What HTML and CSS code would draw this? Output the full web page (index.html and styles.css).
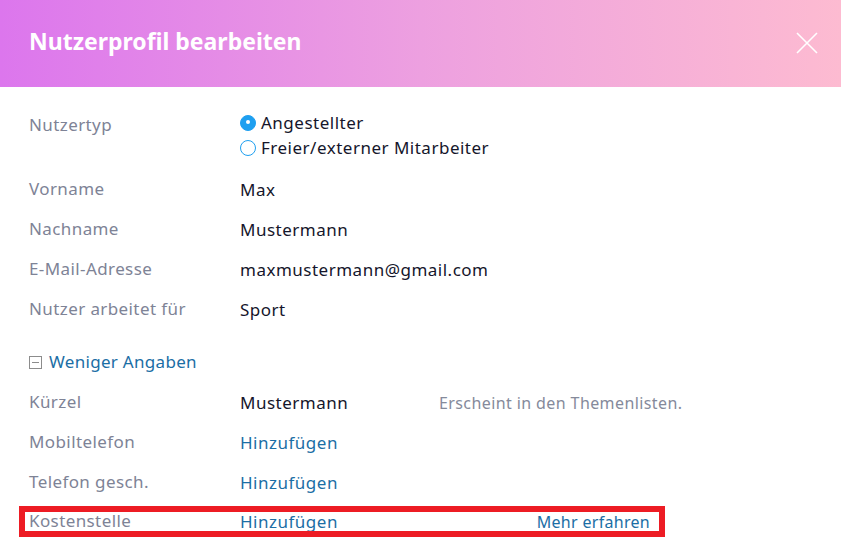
FILE: index.html
```html
<!DOCTYPE html>
<html lang="de">
<head>
    <meta charset="UTF-8">
    <meta name="viewport" content="width=device-width, initial-scale=1.0">
    <title>Nutzerprofil bearbeiten</title>
    <link rel="stylesheet" href="styles.css">
</head>
<body>
    <div class="dialog">
        <div class="dialog-header">
            <h1>Nutzerprofil bearbeiten</h1>
            <button class="close-btn" aria-label="Schließen">
                <svg width="22" height="22" viewBox="0 0 22 22">
                    <path d="M1 1 L21 21 M21 1 L1 21" stroke="#fff" stroke-width="1.6" fill="none"/>
                </svg>
            </button>
        </div>
        <div class="dialog-body">
            <div class="row">
                <div class="label">Nutzertyp</div>
                <div class="value radio-group">
                    <label class="radio"><span class="dot checked"></span>Angestellter</label>
                    <label class="radio"><span class="dot"></span>Freier/externer Mitarbeiter</label>
                </div>
            </div>
            <div class="row">
                <div class="label">Vorname</div>
                <div class="value">Max</div>
            </div>
            <div class="row">
                <div class="label">Nachname</div>
                <div class="value">Mustermann</div>
            </div>
            <div class="row">
                <div class="label">E-Mail-Adresse</div>
                <div class="value">maxmustermann@gmail.com</div>
            </div>
            <div class="row">
                <div class="label">Nutzer arbeitet für</div>
                <div class="value">Sport</div>
            </div>

            <div class="toggle">
                <span class="minus-box"></span>
                <a href="#">Weniger Angaben</a>
            </div>

            <div class="row">
                <div class="label">Kürzel</div>
                <div class="value short">Mustermann</div>
                <div class="hint">Erscheint in den Themenlisten.</div>
            </div>
            <div class="row">
                <div class="label">Mobiltelefon</div>
                <div class="value"><a href="#">Hinzufügen</a></div>
            </div>
            <div class="row">
                <div class="label">Telefon gesch.</div>
                <div class="value"><a href="#">Hinzufügen</a></div>
            </div>
            <div class="row highlight">
                <div class="label">Kostenstelle</div>
                <div class="value"><a href="#">Hinzufügen</a></div>
                <a href="#" class="more">Mehr erfahren</a>
            </div>
        </div>
    </div>
</body>
</html>
```

FILE: styles.css
```css
body {
    margin: 0;
    padding: 0;
    background-color: #ffffff;
    font-family: "Noto Sans", "Open Sans", sans-serif;
    overflow: hidden;
}
a {
    color: #1b6ea5;
    text-decoration: none;
}
.dialog {
    width: 841px;
    height: 543px;
    background-color: #ffffff;
}
.dialog-header {
    height: 87px;
    display: flex;
    align-items: center;
    justify-content: space-between;
    padding: 0 23px 0 29px;
    background: linear-gradient(90deg, #dc76ed 0%, #eda0e0 50%, #fdbbd1 100%);
}
.dialog-header h1 {
    margin: 0 0 5px 0;
    color: #ffffff;
    font-size: 23px;
    font-weight: 700;
}
.close-btn {
    background: none;
    border: none;
    padding: 0;
    margin-bottom: 2px;
    cursor: pointer;
    display: flex;
}
.dialog-body {
    padding: 27px 0 0 29px;
}
.row {
    display: flex;
    line-height: 24px;
    margin-bottom: 16px;
}
.label {
    width: 211px;
    flex-shrink: 0;
    color: #7e8396;
    font-size: 17px;
    letter-spacing: 0.4px;
    margin-top: -1px;
}
.value {
    color: #15162b;
    font-size: 17px;
    letter-spacing: 0.5px;
}
.value.short {
    width: 199px;
}
.hint {
    color: #858a9b;
    font-size: 16px;
    letter-spacing: 0.4px;
}
.radio-group {
    display: flex;
    flex-direction: column;
    line-height: 25px;
    margin-top: -4px;
    margin-bottom: 2px;
}
.radio {
    display: flex;
    align-items: center;
}
.dot {
    width: 16px;
    height: 16px;
    border: 1.5px solid #1e9ff0;
    border-radius: 50%;
    margin-right: 5px;
    box-sizing: border-box;
    position: relative;
}
.dot.checked {
    background-color: #1e9ff0;
}
.dot.checked::after {
    content: "";
    position: absolute;
    left: 4.5px;
    top: 4.5px;
    width: 4px;
    height: 4px;
    border-radius: 50%;
    background-color: #ffffff;
}
.toggle {
    display: flex;
    align-items: center;
    margin: 28px 0 17px 0;
    line-height: 24px;
    font-size: 17px;
    letter-spacing: 0.3px;
}
.minus-box {
    width: 11px;
    height: 11px;
    border: 1.5px solid #8c8c8c;
    margin-right: 7px;
    position: relative;
}
.minus-box::after {
    content: "";
    position: absolute;
    left: 2px;
    top: 5px;
    width: 7px;
    height: 1.5px;
    background-color: #8c8c8c;
}
.row.highlight {
    width: 621px;
    height: 19px;
    margin-left: -4px;
    margin-top: 17px;
    padding: 0 9px 0 4px;
    line-height: 20px;
    outline: 6px solid #ed1c24;
}
.row.highlight .value {
    flex: 1;
}
.more {
    font-size: 16px;
    letter-spacing: 0.3px;
}
```
